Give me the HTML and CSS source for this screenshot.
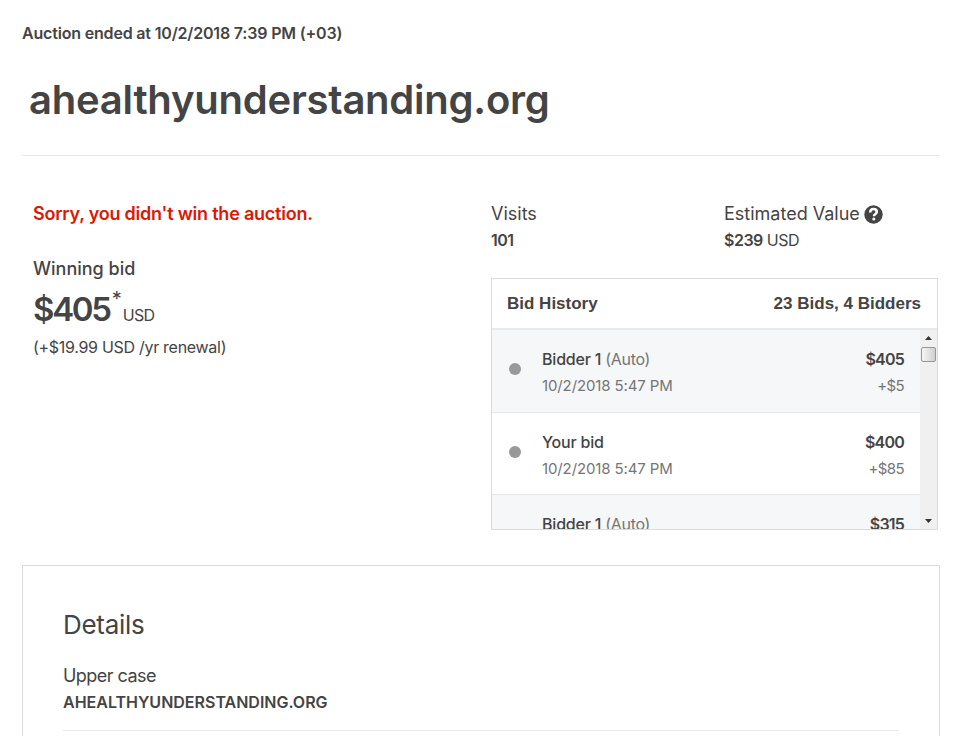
FILE: index.html
```html
<!DOCTYPE html>
<html lang="en">
<head>
    <meta charset="UTF-8">
    <meta name="viewport" content="width=device-width, initial-scale=1.0">
    <title>ahealthyunderstanding.org - Auction</title>
    <link rel="stylesheet" href="styles.css">
</head>
<body>

<div class="page">
    <header>
        <p class="ended">Auction ended at 10/2/2018 7:39 PM (+03)</p>
        <h1>ahealthyunderstanding.org</h1>
    </header>

    <div class="auction">
        <div class="result">
            <p class="sorry">Sorry, you didn't win the auction.</p>
            <p class="winning">Winning bid</p>
            <p class="price"><strong>$405</strong><span class="star">*</span><span class="usd">USD</span></p>
            <p class="renewal">(+$19.99 USD /yr renewal)</p>
        </div>

        <div class="info">
            <div class="stats">
                <div class="stat">
                    <p class="label">Visits</p>
                    <p class="value"><strong>101</strong></p>
                </div>
                <div class="stat">
                    <p class="label estimated">Estimated Value
                        <svg class="help" width="19" height="19" viewBox="0 0 19 19">
                            <circle cx="9.5" cy="9.5" r="9.2" fill="#444"/>
                            <path d="M6.2 7.4C6.2 5.3 7.6 4.1 9.6 4.1C11.6 4.1 12.8 5.2 12.8 6.9C12.8 9 9.9 9 9.9 11.3" fill="none" stroke="#fff" stroke-width="2.5"/>
                            <circle cx="9.8" cy="14.1" r="1.5" fill="#fff"/>
                        </svg>
                    </p>
                    <p class="value"><strong>$239</strong> USD</p>
                </div>
            </div>

            <div class="history">
                <div class="history-header">
                    <span class="history-title">Bid History</span>
                    <span>23 Bids, 4 Bidders</span>
                </div>
                <div class="history-body">
                    <div class="bids">
                        <div class="bid">
                            <span class="dot"></span>
                            <div class="bidder">
                                <p class="name">Bidder 1 <span class="auto">(Auto)</span></p>
                                <p class="date">10/2/2018 5:47 PM</p>
                            </div>
                            <div class="amount">
                                <p class="total">$405</p>
                                <p class="step">+$5</p>
                            </div>
                        </div>
                        <div class="bid">
                            <span class="dot"></span>
                            <div class="bidder">
                                <p class="name">Your bid</p>
                                <p class="date">10/2/2018 5:47 PM</p>
                            </div>
                            <div class="amount">
                                <p class="total">$400</p>
                                <p class="step">+$85</p>
                            </div>
                        </div>
                        <div class="bid">
                            <span class="dot empty"></span>
                            <div class="bidder">
                                <p class="name">Bidder 1 <span class="auto">(Auto)</span></p>
                            </div>
                            <div class="amount">
                                <p class="total">$315</p>
                            </div>
                        </div>
                    </div>
                    <div class="scrollbar">
                        <svg class="arrow" width="7" height="4" viewBox="0 0 7 4"><path d="M0 4L3.5 0L7 4Z" fill="#333"/></svg>
                        <span class="thumb"></span>
                        <svg class="arrow down" width="7" height="4" viewBox="0 0 7 4"><path d="M0 0L3.5 4L7 0Z" fill="#333"/></svg>
                    </div>
                </div>
            </div>
        </div>
    </div>

    <div class="details">
        <h2>Details</h2>
        <div class="detail">
            <p class="detail-label">Upper case</p>
            <p class="detail-value">AHEALTHYUNDERSTANDING.ORG</p>
        </div>
    </div>
</div>

</body>
</html>
```
FILE: styles.css
```css
* {
    box-sizing: border-box;
}

body {
    font-family: Inter, "Liberation Sans", sans-serif;
    font-size: 16px;
    line-height: 26px;
    margin: 0;
    background-color: #fff;
    color: #444;
}

p, h1, h2 {
    margin: 0;
}

strong {
    font-weight: 600;
}

.page {
    display: flex;
    flex-direction: column;
    width: 918px;
    min-height: 100vh;
    margin-left: 22px;
    padding-top: 21px;
}

header {
    padding-bottom: 31px;
    border-bottom: 1px solid #e8e8e8;
}

.ended {
    line-height: 24px;
    font-weight: 600;
    letter-spacing: -0.18px;
}

h1 {
    margin-top: 31px;
    padding-left: 7px;
    font-size: 40px;
    line-height: 48px;
    font-weight: 600;
    letter-spacing: -0.23px;
}

.auction {
    display: flex;
    padding-top: 45px;
}

.result {
    width: 469px;
    padding-left: 11px;
}

.sorry {
    font-size: 18px;
    font-weight: 600;
    letter-spacing: -0.22px;
    color: #db1802;
}

.winning {
    margin-top: 29px;
    font-size: 18px;
    font-weight: 500;
}

.price {
    display: flex;
    align-items: baseline;
    margin-top: 7px;
    height: 40px;
    line-height: 40px;
}

.price strong {
    font-size: 33px;
    letter-spacing: -2.3px;
}

.star {
    align-self: flex-start;
    margin-left: 2px;
    line-height: 20px;
    font-size: 20px;
}

.usd {
    margin-left: 1px;
    letter-spacing: -0.7px;
}

.renewal {
    margin-top: 6px;
    line-height: 24px;
    letter-spacing: -0.29px;
}

.info {
    width: 447px;
}

.stats {
    display: grid;
    grid-template-columns: 233px 1fr;
}

.label {
    font-size: 18px;
}

.estimated {
    display: flex;
    align-items: center;
    gap: 4px;
}

.value {
    letter-spacing: -0.5px;
}

.history {
    height: 252px;
    margin-top: 25px;
    border: 1px solid #d9dbdc;
}

.history-header {
    display: flex;
    justify-content: space-between;
    height: 51px;
    padding: 0 16px 0 15px;
    border-bottom: 2px solid #e8eaeb;
    font-family: "Liberation Sans", Arial, sans-serif;
    font-size: 17px;
    line-height: 49px;
    font-weight: bold;
}

.history-body {
    display: flex;
    height: 199px;
    overflow: hidden;
}

.bids {
    flex: 1;
}

.bid {
    display: flex;
    height: 82.5px;
    padding: 16px 16px 0 17px;
    border-bottom: 1px solid #e8e8e8;
}

.bid:nth-child(odd) {
    background-color: #f5f7f8;
}

.dot {
    width: 12px;
    height: 12px;
    margin: 17px 21px 0 0;
    border-radius: 50%;
    background-color: #999;
}

.dot.empty {
    background: none;
}

.bidder {
    flex: 1;
}

.name {
    font-weight: 500;
    letter-spacing: -0.2px;
}

.auto {
    font-weight: 400;
    color: #757575;
    letter-spacing: -0.3px;
}

.date, .step {
    font-size: 15px;
    line-height: 27px;
    color: #757575;
}

.date {
    letter-spacing: -0.12px;
}

.amount {
    text-align: right;
}

.total {
    font-weight: 600;
    letter-spacing: -0.8px;
}

.step {
    letter-spacing: -0.6px;
}

.scrollbar {
    display: flex;
    flex-direction: column;
    align-items: center;
    width: 17px;
    padding: 6px 1px 6px 0;
    background-color: #f0f0f0;
}

.thumb {
    width: 15px;
    height: 15px;
    margin-top: 7px;
    border: 1px solid #979797;
    border-radius: 2px;
    background: linear-gradient(to right, #f5f5f5, #cfcfd1);
}

.down {
    margin-top: auto;
}

.details {
    flex: 1;
    margin-top: 35px;
    padding: 42px 40px 0;
    border: 1px solid #d9dbdc;
    border-bottom: none;
}

h2 {
    font-size: 26px;
    line-height: 34px;
    font-weight: 400;
    letter-spacing: -0.3px;
}

.detail {
    margin-top: 21px;
    padding-bottom: 14px;
    border-bottom: 1px solid #e8e8e8;
}

.detail-label {
    font-size: 18px;
    letter-spacing: -0.55px;
}

.detail-value {
    line-height: 27px;
    font-weight: 600;
}
```
